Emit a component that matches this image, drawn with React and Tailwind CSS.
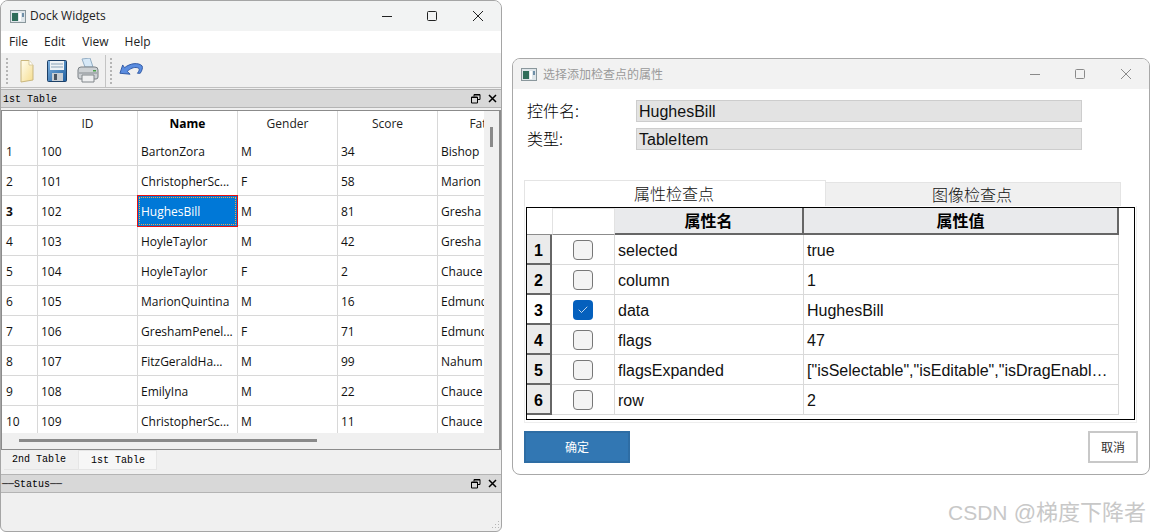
import { Check } from "lucide-react";

const uiFont = "font-['Open_Sans','Noto_Sans_CJK_SC',sans-serif]";
const arialFont = "font-['Liberation_Sans','Noto_Sans_CJK_SC',sans-serif]";
const monoFont = "font-['Liberation_Mono','Noto_Sans_CJK_SC',monospace]";

const people = [
  ["1", "100", "BartonZora", "M", "34", "Bishop"],
  ["2", "101", "ChristopherSc...", "F", "58", "Marion"],
  ["3", "102", "HughesBill", "M", "81", "Gresha"],
  ["4", "103", "HoyleTaylor", "M", "42", "Gresha"],
  ["5", "104", "HoyleTaylor", "F", "2", "Chauce"],
  ["6", "105", "MarionQuintina", "M", "16", "Edmund"],
  ["7", "106", "GreshamPenel...", "F", "71", "Edmund"],
  ["8", "107", "FitzGeraldHa...", "M", "99", "Nahum"],
  ["9", "108", "EmilyIna", "M", "22", "Chauce"],
  ["10", "109", "ChristopherSc...", "M", "11", "Chauce"],
];

const props = [
  ["selected", "true", false],
  ["column", "1", false],
  ["data", "HughesBill", true],
  ["flags", "47", false],
  ["flagsExpanded", '["isSelectable","isEditable","isDragEnabl…', false],
  ["row", "2", false],
];

const AppIcon = () => (
  <svg width="16" height="13" viewBox="0 0 16 13" className="shrink-0">
    <rect x="0.5" y="0.5" width="15" height="12" fill="#dfe6ea" stroke="#8a979c" />
    <rect x="2" y="3" width="6" height="8" fill="#2f6d5a" />
    <rect x="9" y="3" width="2" height="8" fill="#fff" />
    <rect x="12" y="3" width="2" height="4" fill="#6f8fa8" />
  </svg>
);

const WindowButtons = ({ color }) => (
  <div className="flex items-center">
    <svg width="12" height="12" viewBox="0 0 12 12"><path d="M1 6.500h10" stroke={color} /></svg>
    <svg width="12" height="12" viewBox="0 0 12 12" className="ml-[33px] mr-[34px]"><rect x="1.500" y="1.500" width="9" height="9" fill="none" stroke={color} rx="1" /></svg>
    <svg width="12" height="12" viewBox="0 0 12 12"><path d="M1 1l10 10M11 1L1 11" stroke={color} /></svg>
  </div>
);

const DockButtons = () => (
  <div className="flex items-center gap-[7px]">
    <svg width="10" height="10" viewBox="0 0 10 10">
      <path d="M3 2.500V.5h6v5H7M.5 3h6v6h-6z" fill="none" stroke="#000" />
      <path d="M1 3.500h5M3 1h6" stroke="#000" />
    </svg>
    <svg width="9" height="9" viewBox="0 0 9 9"><path d="M1 1l7 7M8 1L1 8" stroke="#000" strokeWidth="1.500" /></svg>
  </div>
);

const Grip = () => (
  <div className="flex flex-col gap-[2px] mx-[3px]">
    {[0, 1, 2, 3, 4, 5, 6].map((i) => (
      <span key={i} className="block w-[2px] h-[2px] bg-[#b5b5b5]" />
    ))}
  </div>
);

const Toolbar = () => (
  <div className="flex items-center h-[34px] bg-[#f0f0f0] pl-[2px] border-b border-[#c0c0c0]">
    <Grip />
    <svg width="14" height="24" viewBox="0 0 14 24" className="ml-[9px]">
      <defs>
        <linearGradient id="page" x1="0" y1="0" x2="1" y2="1">
          <stop offset="0" stopColor="#fffdf0" />
          <stop offset="1" stopColor="#f6dd8e" />
        </linearGradient>
      </defs>
      <path d="M1 1.500h8l4 4.500v15l-12 2z" fill="url(#page)" stroke="#c9b67e" />
      <path d="M9 1.500v4.500h4" fill="#fff" stroke="#d8cba0" />
    </svg>
    <svg width="20" height="22" viewBox="0 0 20 22" className="ml-[13px]">
      <defs>
        <linearGradient id="disk" x1="0" y1="0" x2="1" y2="1">
          <stop offset="0" stopColor="#7fb2e0" />
          <stop offset="1" stopColor="#1f5f9f" />
        </linearGradient>
      </defs>
      <rect x="0.500" y="0.500" width="19" height="21" rx="1" fill="url(#disk)" stroke="#1c3f66" />
      <rect x="3" y="1" width="14" height="9" fill="#eef2f5" />
      <path d="M4 4h12M4 7h12" stroke="#8ba3b8" />
      <rect x="5" y="13" width="11" height="8" fill="#c9ced3" />
      <rect x="7" y="14" width="3" height="6" fill="#4b5560" />
    </svg>
    <svg width="22" height="25" viewBox="0 0 22 25" className="ml-[10px]">
      <path d="M5 1l8-1 3 9H8z" fill="#d6e8f7" stroke="#94aec4" />
      <path d="M1 12q0-3 3-3h14q3 0 3 3v7q0 2-2 2H3q-2 0-2-2z" fill="#cdd1d4" stroke="#7a8085" />
      <path d="M5 17h12v7H5z" fill="#eff0f1" stroke="#80868a" />
      <path d="M2 15h18" stroke="#868c91" />
      <rect x="16" y="12" width="3" height="1.500" fill="#4aa24a" />
    </svg>
    <span className="block w-[1px] h-[32px] ml-[6px] bg-[#c4c4c4]" />
    <span className="ml-[1px]"><Grip /></span>
    <svg width="24" height="17" viewBox="0 0 26 18" className="ml-[4px]">
      <path d="M1 12l3-9 2 3c6-5 15-6 19-2 1 2 0 5-2 8l-3 0c2-3 3-5 0-6-4-1-8 1-11 4l3 3z" fill="#5b8de0" stroke="#2c56a2" strokeLinejoin="round" />
    </svg>
  </div>
);

const PeopleTable = () => (
  <div className="h-[322px] w-[482px] overflow-hidden bg-white">
    <div className="grid grid-cols-[36px_100px_100px_100px_100px_100px] h-[25px] text-[12px] text-[#222] leading-[26px] text-center">
      {["", "ID", "Name", "Gender", "Score", "Father"].map((head, i) => (
        <div key={i} className={`border-r border-[#d8d8d8] ${head === "Name" ? "font-bold text-black" : ""}`}>{head}</div>
      ))}
    </div>
    {people.map((row) => (
      <div key={row[0]} className="grid grid-cols-[36px_100px_100px_100px_100px_100px] h-[30px] text-[12px] text-[#111] leading-[31px] border-b border-[#d8d8d8]">
        {row.map((cell, i) => {
          const selected = row[0] === "3" && i === 2;
          if (selected) {
            return (
              <div key={i} className="relative border border-[#e81010] bg-[#0078d7] -mt-[1px] -ml-[1px] h-[32px] p-[1px]">
                <div className="border border-dotted border-[#f2a94a] h-full pl-[1px] leading-[27px] text-white">{cell}</div>
              </div>
            );
          }
          return (
            <div key={i} className={`border-r border-[#d8d8d8] whitespace-nowrap overflow-hidden ${i === 0 ? "pl-[4px]" : "pl-[3px]"} ${i === 0 && row[0] === "3" ? "font-bold" : ""}`}>
              {cell}
            </div>
          );
        })}
      </div>
    ))}
  </div>
);

const DockWindow = () => (
  <div className={`w-[502px] h-[532px] shrink-0 flex flex-col overflow-hidden rounded-t-[8px] rounded-b-[6px] border border-[#a5a5a5] bg-[#f0f0f0] ${uiFont}`}>
    <div className="flex items-center justify-between h-[30px] pl-[9px] pr-[17px] bg-[#f2f3f3] text-[12px] text-[#222]">
      <div className="flex items-center gap-[4px]">
        <AppIcon />
        Dock Widgets
      </div>
      <WindowButtons color="#222" />
    </div>
    <div className="flex items-center gap-[16px] h-[23px] pl-[8px] bg-white border-b border-[#f0f0f0] text-[12px] text-[#222]">
      <span>File</span>
      <span>Edit</span>
      <span className="ml-[1px]">View</span>
      <span>Help</span>
    </div>
    <Toolbar />
    <div className={`flex items-center justify-between h-[19px] mt-[1px] pl-[2px] pr-[4px] bg-[#d8d8d8] border-y border-[#b4b4b4] text-[10px] text-black ${monoFont}`}>
      <span className="pt-[1px]">1st Table</span>
      <DockButtons />
    </div>
    <div className="mt-[2px] h-[340px] border border-[#8b8b8b] border-r-2 bg-[#f0f0f0]">
      <div className="flex">
        <PeopleTable />
        <div className="flex-1 pl-[6px] pt-[16px]">
          <span className="block w-[3px] h-[20px] bg-[#8a8a8a]" />
        </div>
      </div>
      <div className="pl-[17px] pt-[6px]">
        <span className="block w-[298px] h-[3px] bg-[#8a8a8a]" />
      </div>
    </div>
    <div className={`flex items-end h-[22px] pl-[3px] text-[10px] text-black ${monoFont}`}>
      <div className="w-[74px] h-[18px] mb-[2px] bg-[#f0f0f0] border-b border-[#e4e4e4] pl-[8px] leading-[16px]">2nd Table</div>
      <div className="w-[79px] h-[20px] mb-[2px] bg-[#f7f7f7] border border-[#e6e6e6] pl-[12px] leading-[20px]">1st Table</div>
    </div>
    <div className={`flex items-center justify-between h-[19px] mt-[2px] pl-[1px] pr-[4px] bg-[#d8d8d8] border-y border-[#b4b4b4] text-[10px] text-black ${monoFont}`}>
      <span className="pt-[1px]">──Status──</span>
      <DockButtons />
    </div>
    <div className="flex-1 relative">
      <svg width="10" height="10" viewBox="0 0 10 10" className="absolute right-[1px] bottom-[1px]">
        <path d="M8 1h1v1H8zM5 4h1v1H5zM8 4h1v1H8zM2 7h1v1H2zM5 7h1v1H5zM8 7h1v1H8z" fill="#b5b5b5" />
      </svg>
    </div>
  </div>
);

const FieldRow = ({ label, value }) => (
  <div className="flex items-center h-[22px]">
    <span className="w-[109px] text-[16px] leading-[20px] -mt-[2px] text-black font-light">{label}</span>
    <div className={`w-[446px] h-[22px] bg-[#e3e3e3] border border-[#cdcdcd] pl-[2px] text-[16px] leading-[21px] text-[#111] ${arialFont}`}>{value}</div>
  </div>
);

const Checkbox = ({ checked }) =>
  checked ? (
    <span className="flex items-center justify-center w-[20px] h-[20px] rounded-[4px] bg-[#0560bd]">
      <Check size={12} color="#fff" strokeWidth={1.5} />
    </span>
  ) : (
    <span className="block w-[20px] h-[20px] rounded-[4px] border border-[#777] bg-[#f3f3f3]" />
  );

const PropsTable = () => (
  <div className="w-[609px] h-[213px] border border-black bg-white">
    <div className="flex h-[27px]">
      <div className="w-[25px] border-b border-[#8c8c8c]" />
      <div className="w-[63px] border border-[#e2e2e2] border-b-[#8c8c8c]" />
      <div className="w-[189px] bg-[#e9eaec] border-r-2 border-b-2 border-[#666] text-center text-[16px] font-bold leading-[25px] text-black">属性名</div>
      <div className="w-[315px] bg-[#e9eaec] border-r-2 border-b-2 border-[#666] text-center text-[16px] font-bold leading-[25px] text-black">属性值</div>
    </div>
    {props.map((row, i) => (
      <div key={row[0]} className={`flex h-[30px] text-[16px] text-[#111] leading-[32px] ${arialFont}`}>
        <div className={`w-[25px] border-r-2 border-b-2 border-[#666] text-center font-bold text-black ${i === 2 ? "bg-white" : "bg-[#ebebeb]"}`}>{i + 1}</div>
        <div className="w-[63px] flex items-center justify-center border-b border-r border-[#d9d9d9]">
          <Checkbox checked={row[2]} />
        </div>
        <div className="w-[189px] pl-[3px] border-b border-r border-[#d9d9d9]">{row[0]}</div>
        <div className="w-[315px] pl-[3px] border-b border-r border-[#d9d9d9] whitespace-nowrap overflow-hidden">{row[1]}</div>
      </div>
    ))}
  </div>
);

const CheckDialog = () => (
  <div className="w-[638px] ml-[10px] pt-[58px] flex flex-col">
    <div className="h-[417px] flex flex-col rounded-[8px] border border-[#a8a8a8] bg-white font-['Noto_Sans_CJK_SC',sans-serif] overflow-hidden">
      <div className="flex items-center justify-between h-[30px] shrink-0 pl-[8px] pr-[17px] bg-[#f2f2f2]">
        <div className="flex items-center gap-[6px] text-[12px] text-[#9a9a9a]">
          <AppIcon />
          选择添加检查点的属性
        </div>
        <WindowButtons color="#8a8a8a" />
      </div>
      <div className="flex flex-col gap-[6px] pl-[14px] pt-[11px]">
        <FieldRow label="控件名:" value="HughesBill" />
        <FieldRow label="类型:" value="TableItem" />
      </div>
      <div className="flex items-end h-[26px] mt-[30px] ml-[11px] text-[16px] text-[#111] font-light">
        <div className="w-[302px] h-[26px] bg-white border border-b-0 border-[#e4e4e4] pr-[2px] text-center leading-[24px]">属性检查点</div>
        <div className="w-[295px] h-[24px] bg-[#f0f0f0] border-t border-r border-[#e4e4e4] pr-[2px] text-center leading-[22px]">图像检查点</div>
      </div>
      <div className="ml-[11px] w-[613px] h-[217px] pl-[1px] pt-[1px] border-r border-b border-l border-[#eeeeee]">
        <PropsTable />
      </div>
      <div className="flex justify-between items-start pl-[11px] pr-[11px] mt-[8px]">
        <button className="w-[106px] h-[32px] bg-[#3277b3] border-2 border-[#2e6da4] text-[12px] text-white">确定</button>
        <button className="w-[50px] h-[32px] bg-white border-2 border-[#c8c8c8] text-[12px] text-[#333]">取消</button>
      </div>
    </div>
    <div className={`h-[36px] pr-[4px] text-right text-[22px] leading-[76px] text-[#c8c8c8] whitespace-nowrap ${arialFont}`}>
      <span className="text-[21px]">CSDN</span> @梯度下降者
    </div>
  </div>
);

const App = () => {
  return (
    <div className="flex w-[1150px] h-[532px] bg-white overflow-hidden">
      <DockWindow />
      <CheckDialog />
    </div>
  );
};

export default App;
